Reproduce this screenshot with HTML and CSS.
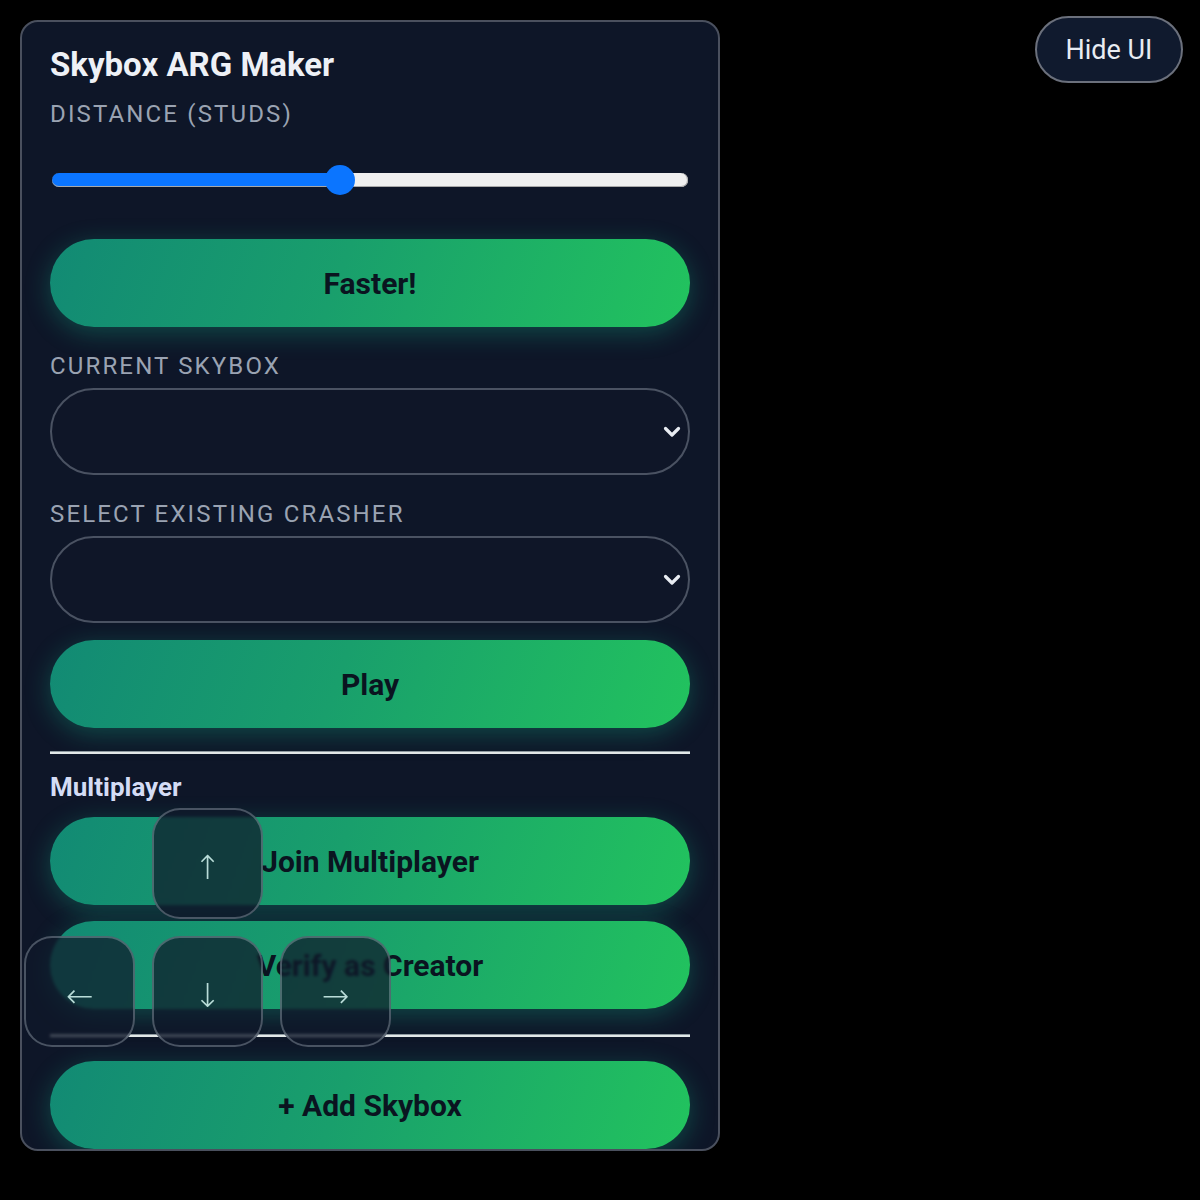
FILE: index.html
```html
<!DOCTYPE html>
<html lang="en">
<head>
<meta charset="utf-8">
<title>Skybox ARG Maker</title>
<link rel="stylesheet" href="styles.css">
</head>
<body>
<div class="panel">
  <h1 class="title">Skybox ARG Maker</h1>
  <label class="field-label">Distance (studs)</label>
  <input class="slider" type="range" min="0" max="100" value="45">
  <button class="btn">Faster!</button>

  <label class="field-label field-label-gap">Current Skybox</label>
  <div class="select-wrap">
    <select class="select"></select>
    <svg class="chevron" viewBox="0 0 18 12" width="18" height="12"><path d="M2.5 2.5 L9 9 L15.5 2.5" fill="none" stroke="#e8ecf2" stroke-width="3.2" stroke-linecap="round" stroke-linejoin="round"/></svg>
  </div>

  <label class="field-label field-label-gap">Select Existing Crasher</label>
  <div class="select-wrap">
    <select class="select"></select>
    <svg class="chevron" viewBox="0 0 18 12" width="18" height="12"><path d="M2.5 2.5 L9 9 L15.5 2.5" fill="none" stroke="#e8ecf2" stroke-width="3.2" stroke-linecap="round" stroke-linejoin="round"/></svg>
  </div>

  <button class="btn btn-play">Play</button>

  <hr class="divider divider-top">
  <h2 class="section-title">Multiplayer</h2>
  <button class="btn">Join Multiplayer</button>
  <button class="btn btn-stack">Verify as Creator</button>
  <hr class="divider divider-bottom">
  <button class="btn">+ Add Skybox</button>
</div>

<button class="hide-ui">Hide UI</button>

<div class="dpad">
  <button class="key key-up">↑</button>
  <button class="key key-left">←</button>
  <button class="key key-down">↓</button>
  <button class="key key-right">→</button>
</div>
</body>
</html>
```

FILE: styles.css
```css
* { box-sizing: border-box; }

html, body {
  margin: 0;
  padding: 0;
  background: #000;
  height: 100%;
}

body {
  font-family: Roboto, "Liberation Sans", Arial, sans-serif;
  color: #e5e7eb;
  padding: 20px;
}

.panel {
  width: 700px;
  height: 1131px;
  background: rgba(15, 23, 42, 0.95);
  border: 2px solid #4a505e;
  border-radius: 18px;
  padding: 23px 28px 0 28px;
  display: flex;
  flex-direction: column;
  overflow: hidden;
}

.title {
  margin: 0 0 15px 0;
  font-size: 33px;
  line-height: 40px;
  font-weight: 700;
  color: #eef1f6;
}

.field-label {
  display: block;
  font-size: 24px;
  line-height: 28px;
  letter-spacing: 2.15px;
  text-transform: uppercase;
  color: #9aa3b2;
}

.field-label-gap {
  margin-top: 25px;
  margin-bottom: 8px;
}

.slider {
  -webkit-appearance: none;
  appearance: none;
  width: 636px;
  height: 30px;
  margin: 37px 2px 45px 2px;
  background: transparent;
  padding: 0;
}

.slider::-webkit-slider-runnable-track {
  height: 14px;
  border-radius: 7px;
  background: linear-gradient(to right, #0b75ff 0, #0b75ff 45%, #efefef 45%, #efefef 100%);
  box-shadow: inset 0 -1px 0 #a8a8a8, inset -1px 0 0 #b0b0b0;
}

.slider::-webkit-slider-thumb {
  -webkit-appearance: none;
  appearance: none;
  width: 30px;
  height: 30px;
  border-radius: 50%;
  background: #0b75ff;
  border: none;
  margin-top: -8px;
}

.btn {
  flex: none;
  width: 640px;
  height: 88px;
  border: none;
  border-radius: 44px;
  background: linear-gradient(110deg, #128a74 0%, #199f6c 45%, #22c35e 100%);
  box-shadow: 0 6px 26px rgba(20, 184, 140, 0.32);
  font-family: Roboto, "Liberation Sans", Arial, sans-serif;
  font-size: 30px;
  font-weight: 700;
  color: #0a1420;
  padding: 0;
  cursor: pointer;
}

.btn-play { margin-top: 17px; }
.btn-stack { margin-top: 16px; }

.select-wrap {
  position: relative;
  flex: none;
  height: 87px;
}

.select {
  -webkit-appearance: none;
  appearance: none;
  width: 640px;
  height: 87px;
  border: 2px solid #4a5262;
  border-radius: 44px;
  background: #0f1628;
  color: #e5e7eb;
  font-family: Roboto, "Liberation Sans", Arial, sans-serif;
  font-size: 24px;
  padding: 0 28px;
}

.chevron {
  position: absolute;
  right: 9px;
  top: 38px;
}

.divider {
  flex: none;
  width: 640px;
  height: 3px;
  border: none;
  border-top: 1px solid #8e9aa0;
  background: #e2e8e8;
  margin: 0;
}

.divider-top { margin: 23px 0 18px 0; }
.divider-bottom { margin: 25px 0 24px 0; }

.section-title {
  margin: 0 0 15px 0;
  font-size: 26px;
  line-height: 30px;
  font-weight: 700;
  color: #d4dcf5;
}

.hide-ui {
  position: absolute;
  top: 16px;
  right: 17px;
  width: 148px;
  height: 67px;
  border: 2px solid #6b707c;
  border-radius: 34px;
  background: #101a2e;
  color: #e8ecf2;
  font-family: Roboto, "Liberation Sans", Arial, sans-serif;
  font-size: 27px;
  padding: 0;
}

.dpad {
  position: absolute;
  left: 24px;
  top: 808px;
  display: grid;
  grid-template-columns: repeat(3, 111px);
  grid-template-rows: repeat(2, 111px);
  gap: 17px;
}

.key {
  width: 111px;
  height: 111px;
  border: 2px solid rgba(200, 210, 222, 0.32);
  border-radius: 28px;
  background: rgba(15, 23, 42, 0.72);
  -webkit-backdrop-filter: blur(1.5px);
  backdrop-filter: blur(1.5px);
  color: #b9dcd8;
  font-family: Roboto, "DejaVu Sans", sans-serif;
  font-size: 33px;
  font-weight: 300;
  padding: 8px 0 0 0;
  display: flex;
  align-items: center;
  justify-content: center;
}

.key-up { grid-column: 2; grid-row: 1; }
.key-left { grid-column: 1; grid-row: 2; }
.key-down { grid-column: 2; grid-row: 2; }
.key-right { grid-column: 3; grid-row: 2; }
```
